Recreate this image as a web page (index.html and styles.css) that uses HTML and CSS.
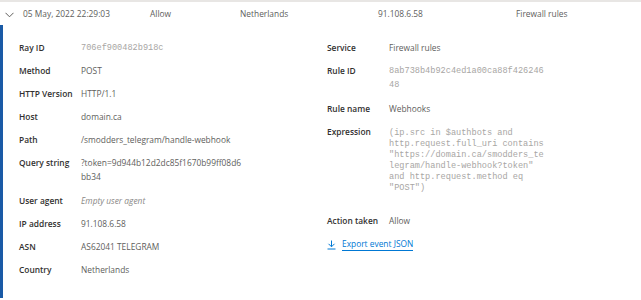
FILE: index.html
```html
<!DOCTYPE html>
<html>
<head>
<meta charset="utf-8">
<link rel="stylesheet" href="styles.css">
</head>
<body>
<div class="event">
  <div class="head">
    <span class="chev"><svg width="9" height="6" viewBox="0 0 9 6"><path d="M0.5 0.8 L4.5 4.8 L8.5 0.8" fill="none" stroke="#605e5c" stroke-width="1"/></svg></span>
    <span>05 May, 2022 22:29:03</span>
    <span>Allow</span>
    <span>Netherlands</span>
    <span>91.108.6.58</span>
    <span>Firewall rules</span>
  </div>
  <div class="details">
    <div class="col">
      <div class="row"><span class="lbl">Ray ID</span><span class="val mono">706ef900482b918c</span></div>
      <div class="row"><span class="lbl">Method</span><span class="val">POST</span></div>
      <div class="row"><span class="lbl">HTTP Version</span><span class="val">HTTP/1.1</span></div>
      <div class="row"><span class="lbl">Host</span><span class="val">domain.ca</span></div>
      <div class="row"><span class="lbl">Path</span><span class="val">/smodders_telegram/handle-webhook</span></div>
      <div class="row query"><span class="lbl">Query string</span><span class="val brk">?token=9d944b12d2dc85f1670b99ff08d6bb34</span></div>
      <div class="row"><span class="lbl">User agent</span><span class="val em">Empty user agent</span></div>
      <div class="row"><span class="lbl">IP address</span><span class="val">91.108.6.58</span></div>
      <div class="row"><span class="lbl">ASN</span><span class="val">AS62041 TELEGRAM</span></div>
      <div class="row"><span class="lbl">Country</span><span class="val">Netherlands</span></div>
    </div>
    <div class="col">
      <div class="row"><span class="lbl">Service</span><span class="val">Firewall rules</span></div>
      <div class="row ruleid"><span class="lbl">Rule ID</span><span class="val mono brk">8ab738b4b92c4ed1a00ca88f42624648</span></div>
      <div class="row"><span class="lbl">Rule name</span><span class="val">Webhooks</span></div>
      <div class="row expr"><span class="lbl">Expression</span><span class="val mono code">(ip.src in $authbots and<br>http.request.full_uri contains<br>"https://domain.ca/smodders_te<br>legram/handle-webhook?token"<br>and http.request.method eq<br>"POST")</span></div>
      <div class="row action"><span class="lbl">Action taken</span><span class="val">Allow</span></div>
      <div class="row-link"><a class="export" href="#"><svg width="9" height="10" viewBox="0 0 9 10"><path d="M4.5 0.5 V6.5 M1.5 3.8 L4.5 6.8 L7.5 3.8 M0.5 9 H8.5" fill="none" stroke="#0078d4" stroke-width="1"/></svg><span class="ltxt">Export event JSON</span></a></div>
    </div>
  </div>
</div>
</body>
</html>
```
FILE: styles.css
```css
html, body {
  margin: 0;
  padding: 0;
  background: #ffffff;
}
body {
  font-family: "Open Sans", "Noto Sans", sans-serif;
  font-size: 8.4px;
  color: #605e5c;
  width: 641px;
  height: 300px;
  overflow: hidden;
}
.event {
  border-top: 2px solid #e8e6e4;
}
.head {
  display: grid;
  grid-template-columns: 23px 127px 90px 138px 138px 1fr;
  align-items: center;
  height: 22px;
  line-height: 14px;
  padding-top: 1px;
  color: #605e5c;
}
.chev {
  display: flex;
  padding-left: 5px;
  padding-top: 1px;
}
.details {
  border-left: 3px solid #1a5aa6;
  padding: 16px 0 12px 16px;
  display: grid;
  grid-template-columns: 308px 1fr;
  align-items: start;
}
.col {
  display: flex;
  flex-direction: column;
}
.row {
  display: grid;
  grid-template-columns: 62px 1fr;
  line-height: 14px;
  margin-bottom: 9px;
}
.query {
  margin-bottom: 10px;
}
.ruleid {
  margin-bottom: 10px;
}
.lbl {
  color: #323130;
  font-weight: 600;
}
.val {
  color: #605e5c;
}
.col:first-child .val {
  width: 163px;
}
.col:last-child .val {
  width: 158px;
}
.brk {
  word-break: break-all;
}
.em {
  font-style: italic;
  color: #8a8886;
}
.mono {
  font-family: "Liberation Mono", "DejaVu Sans Mono", monospace;
  font-size: 8.6px;
  color: #a8a6a4;
}
.code {
  line-height: 11px;
  padding-top: 3px;
}
.expr {
  margin-bottom: 20px;
}
.action {
  margin-bottom: 10px;
}
.row-link {
  display: flex;
}
.export {
  display: flex;
  align-items: center;
  gap: 6px;
  color: #0078d4;
  text-decoration: none;
  line-height: 14px;
}
.ltxt {
  border-bottom: 1px solid #0078d4;
  line-height: 12px;
}
```
